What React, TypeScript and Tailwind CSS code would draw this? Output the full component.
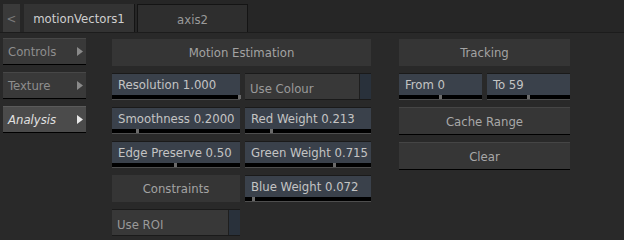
import React from "react";

const font = { fontFamily: '"DejaVu Sans Condensed", "DejaVu Sans", sans-serif', fontStretch: "condensed" as const };

function Slider({ label, pos }: { label: string; pos: number }) {
  return (
    <div className="h-[27px] flex flex-col border-t border-[#1a1a1a]">
      <div className="flex-1 bg-[#3a414b] text-[#c4c4c4] text-[13px] pl-[6px] pb-[1px] flex items-center leading-none whitespace-nowrap overflow-hidden">
        {label}
      </div>
      <div className="h-[4px] bg-black relative">
        <div className="absolute top-0 h-[4px] w-[3px] bg-[#6b6b6b]" style={{ left: `calc(${pos * 100}% - 2px)` }} />
      </div>
      <div className="h-[1px] bg-[#4e4e4e]" />
    </div>
  );
}

function Toggle({ label }: { label: string }) {
  return (
    <div className="h-[27px] flex border-t border-b border-[#1a1a1a]">
      <div className="flex-1 bg-[#383838] text-[#9a9a9a] text-[13px] pl-[5px] flex items-center pt-[3px] leading-none whitespace-nowrap">
        {label}
      </div>
      <div className="w-[12px] bg-[#29313b] border-l border-[#1e1e1e]" />
    </div>
  );
}

function Header({ label }: { label: string }) {
  return (
    <div className="h-[27px] bg-[#353535] text-[#a3a3a3] text-[13px] flex items-center justify-center leading-none whitespace-nowrap">
      {label}
    </div>
  );
}

function Button({ label }: { label: string }) {
  return (
    <div className="h-[28px] bg-[#363636] border-t border-[#454545] border-b border-b-black text-[#a8a8a8] text-[13px] flex items-center justify-center leading-none whitespace-nowrap">
      {label}
    </div>
  );
}

function SideBtn({ label, active }: { label: string; active?: boolean }) {
  return (
    <div
      className={
        "h-[27px] flex items-center justify-between pl-[5px] pr-[3px] border-t border-b border-b-black text-[13px] leading-none whitespace-nowrap " +
        (active
          ? "bg-[#4b4b4b] border-t-[#5a5a5a] text-[#e0e0e0] italic"
          : "bg-[#393939] border-t-[#474747] text-[#8e8e8e]")
      }
    >
      <span>{label}</span>
      <svg width="6" height="9" viewBox="0 0 6 9">
        <path d="M0 0 L6 4.5 L0 9 Z" fill={active ? "#e8e8e8" : "#8a8a8a"} />
      </svg>
    </div>
  );
}

export default function App() {
  return (
    <div className="w-[624px] h-[240px] bg-[#292929] overflow-hidden" style={font}>
      <div className="h-[33px] bg-[#262626] border-b border-[#1c1c1c] flex items-end pl-[3px]">
        <div className="w-[17px] h-[28px] pt-[2px] bg-[#3a3a3a] text-[#7a7a7a] text-[13px] flex items-center justify-center">
          &lt;
        </div>
        <div className="ml-[4px] w-[111px] h-[28px] pt-[2px] bg-[#333333] border-r border-[#141414] text-[#cfcfcf] text-[13px] flex items-center justify-center">
          motionVectors1
        </div>
        <div className="ml-[2px] w-[111px] h-[28px] pt-[2px] bg-[#2e2e2e] border border-b-0 border-[#141414] text-[#9a9a9a] text-[13px] flex items-center justify-center">
          axis2
        </div>
      </div>
      <div className="flex pt-[5px] pl-[3px]">
        <div className="w-[83px] flex flex-col gap-[7px]">
          <SideBtn label="Controls" />
          <SideBtn label="Texture" />
          <SideBtn label="Analysis" active />
        </div>
        <div className="ml-[26px] w-[259px] flex flex-col gap-[7px] pt-[1px]">
          <Header label="Motion Estimation" />
          <div className="grid grid-cols-[128px_126px] gap-x-[5px] gap-y-[7px]">
            <Slider label="Resolution 1.000" pos={1} />
            <Toggle label="Use Colour" />
            <Slider label="Smoothness 0.2000" pos={0.2} />
            <Slider label="Red Weight 0.213" pos={0.213} />
            <Slider label="Edge Preserve 0.50" pos={0.5} />
            <Slider label="Green Weight 0.715" pos={0.715} />
            <Header label="Constraints" />
            <Slider label="Blue Weight 0.072" pos={0.072} />
            <Toggle label="Use ROI" />
          </div>
        </div>
        <div className="ml-[28px] w-[171px] flex flex-col gap-[7px] pt-[1px]">
          <Header label="Tracking" />
          <div className="grid grid-cols-[83px_83px] gap-x-[5px]">
            <Slider label="From 0" pos={0.5} />
            <Slider label="To 59" pos={0.5} />
          </div>
          <Button label="Cache Range" />
          <Button label="Clear" />
        </div>
      </div>
    </div>
  );
}
